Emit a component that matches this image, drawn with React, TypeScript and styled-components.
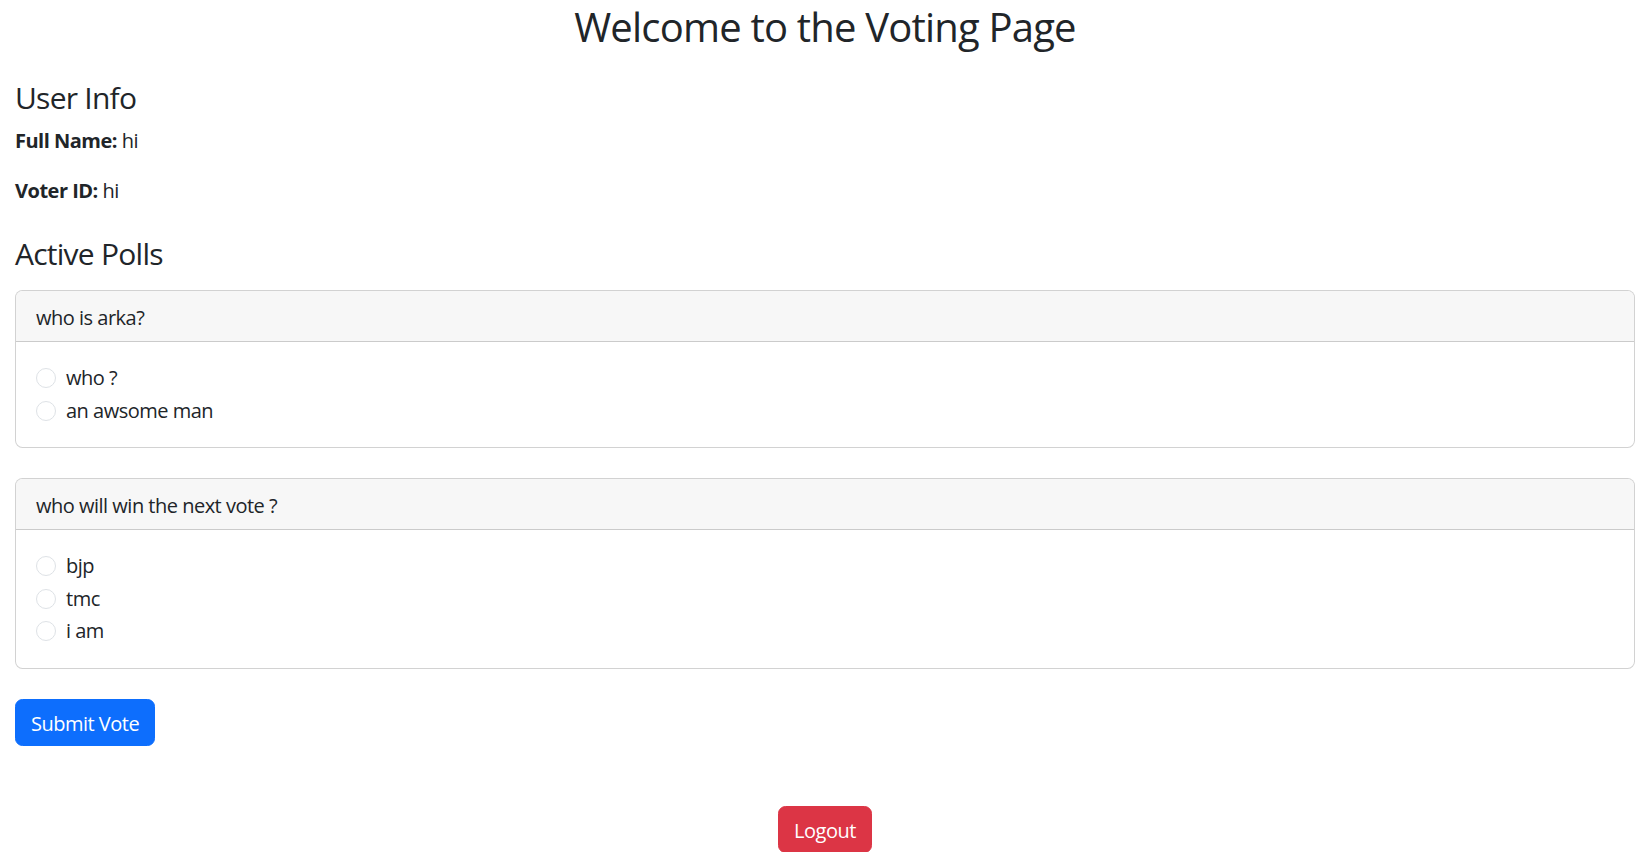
import React from "react";
import styled, { createGlobalStyle } from "styled-components";

const GlobalStyle = createGlobalStyle`
  *, *::before, *::after { box-sizing: border-box; }
  html, body { margin: 0; padding: 0; background: #fff; }
  body {
    font-family: "Open Sans", "Noto Sans", "Liberation Sans", sans-serif;
    font-size: 20px;
    line-height: 1.5;
    color: #212529;
    letter-spacing: -0.025em;
  }
`;

const Page = styled.div`
  padding: 0 15px;
`;

const Title = styled.h1`
  margin: 0 0 27px;
  padding-top: 3px;
  font-size: 40px;
  font-weight: 400;
  line-height: 1.2;
  text-align: center;
  letter-spacing: -0.02em;
`;

const SectionHeading = styled.h4<{ $top?: number; $bottom?: number }>`
  margin: ${(p) => p.$top ?? 0}px 0 ${(p) => (p.$bottom ?? 10) - 2}px;
  padding-top: 2px;
  font-size: 30px;
  font-weight: 400;
  line-height: 1.2;
  letter-spacing: -0.025em;
`;

const InfoLine = styled.p`
  margin: 0 0 18px;
  padding-top: 2px;
  strong { font-weight: 700; }
`;

const Card = styled.div`
  border: 1px solid rgba(0, 0, 0, 0.175);
  border-radius: 7.5px;
  margin-bottom: 30px;
  background: #fff;
  overflow: hidden;
`;

const CardHeader = styled.div`
  padding: 12px 20px 8px;
  background: #f7f7f7;
  border-bottom: 1px solid rgba(0, 0, 0, 0.175);
`;

const CardBody = styled.div`
  padding: 20px;
`;

const OptionRow = styled.label`
  display: flex;
  align-items: flex-start;
  min-height: 30px;
  margin-bottom: 2.5px;
  padding-top: 2px;
  line-height: 28px;
  cursor: pointer;
`;

const Radio = styled.input`
  appearance: none;
  flex: none;
  width: 20px;
  height: 20px;
  margin: 4px 10px 0 0;
  border: 1px solid #dee2e6;
  border-radius: 50%;
  background: #fff;
`;

const Button = styled.button<{ $variant: "primary" | "danger" }>`
  display: inline-block;
  padding: 9.5px 15px 5.5px;
  font-family: inherit;
  font-size: 20px;
  line-height: 1.5;
  letter-spacing: inherit;
  color: #fff;
  border: 1px solid ${(p) => (p.$variant === "primary" ? "#0d6efd" : "#dc3545")};
  background: ${(p) => (p.$variant === "primary" ? "#0d6efd" : "#dc3545")};
  border-radius: 7.5px;
  cursor: pointer;
`;

const Footer = styled.div`
  margin-top: 60px;
  text-align: center;
`;

const polls = [
  { id: "p1", question: "who is arka?", options: ["who ?", "an awsome man"] },
  { id: "p2", question: "who will win the next vote ?", options: ["bjp", "tmc", "i am"] },
];

export default function App() {
  return (
    <>
      <GlobalStyle />
      <Page>
        <Title>Welcome to the Voting Page</Title>
        <SectionHeading>User Info</SectionHeading>
        <InfoLine>
          <strong>Full Name:</strong> hi
        </InfoLine>
        <InfoLine>
          <strong>Voter ID:</strong> hi
        </InfoLine>
        <SectionHeading $top={28} $bottom={20}>Active Polls</SectionHeading>
        {polls.map((poll) => (
          <Card key={poll.id}>
            <CardHeader>{poll.question}</CardHeader>
            <CardBody>
              {poll.options.map((opt) => (
                <OptionRow key={opt}>
                  <Radio type="radio" name={poll.id} />
                  {opt}
                </OptionRow>
              ))}
            </CardBody>
          </Card>
        ))}
        <Button $variant="primary">Submit Vote</Button>
        <Footer>
          <Button $variant="danger">Logout</Button>
        </Footer>
      </Page>
    </>
  );
}
